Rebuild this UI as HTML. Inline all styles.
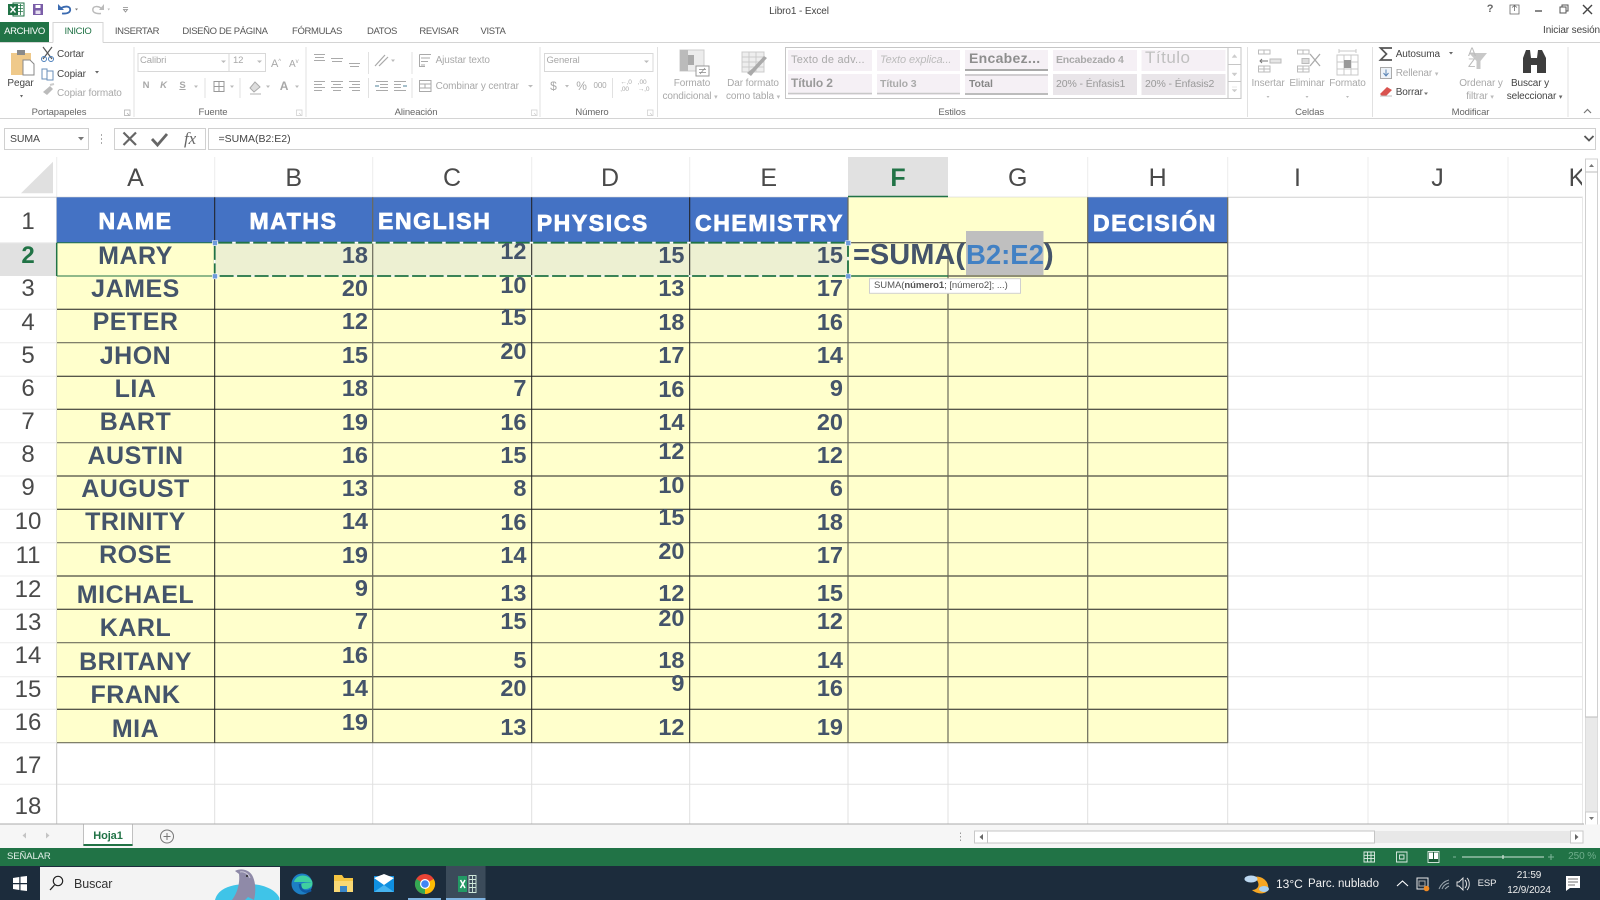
<!DOCTYPE html>
<html lang="es"><head><meta charset="utf-8"><title>Libro1 - Excel</title>
<style>
html,body{margin:0;padding:0;width:1600px;height:900px;overflow:hidden;background:#fff}
#p{position:relative;width:1600px;height:900px;overflow:hidden;font-family:"Liberation Sans",sans-serif;color:#444}
svg.bg{position:absolute;left:0;top:0}
.t{position:absolute;white-space:nowrap;font-size:9.5px;line-height:14px;letter-spacing:-.1px}
.x{transform:translateX(-50%)}
.g{color:#a8a8a8}.m6{color:#666}
.ar{font-size:7px;color:#bbb}
.tab{font-size:9.5px;letter-spacing:-.35px;color:#555}
.n{position:absolute;margin-top:-1px;font:bold 23.5px/30px "Liberation Sans",sans-serif;color:#44546a}
.b{right:1232px}.c{right:1073.5px}.d{right:915.5px}.e{right:757px}
.m{position:absolute;margin-top:1px;left:135.5px;transform:translateX(-50%);font:bold 25px/30px "Liberation Sans",sans-serif;letter-spacing:.5px;color:#44546a;white-space:nowrap}
.rn{position:absolute;margin-top:1px;left:0;width:56px;text-align:center;font:24px/30px "Liberation Sans",sans-serif;color:#4a4a4a}
.cl{position:absolute;top:162.5px;transform:translateX(-50%);font:25px/30px "Liberation Sans",sans-serif;color:#4a4a4a}
.h{position:absolute;font:bold 23px/30px "Liberation Sans",sans-serif;letter-spacing:1.6px;color:#fff;-webkit-text-stroke:.8px #fff;white-space:nowrap}
</style></head><body><div id="p">
<svg class="bg" width="1600" height="900" viewBox="0 0 1600 900" fill="none">
<!-- ribbon lines -->
<rect x="0" y="22" width="49" height="20.5" fill="#217346"/>
<path d="M0 42.5H53M103 42.5H1600" stroke="#d4d4d4"/>
<path d="M53 42.5V22.5H103V42.5" stroke="#d4d4d4"/>
<path d="M0 118.5H1600" stroke="#d4d4d4"/>
<path d="M134 47V117M306 47V117M540 47V117M657.5 47V117M1247.5 47V117M1372.5 47V117M1568 47V117" stroke="#e1e1e1"/>
<path d="M368.5 52V74M412 52V74M368.5 78V98M412 78V98M612.5 78V98M205 78V98M240 78V98" stroke="#e1e1e1"/>
<!-- title icons -->
<rect x="13" y="3" width="11" height="13" fill="#fff" stroke="#217346"/><path d="M18 5.5H23M18 8.5H23M18 11.5H23M20.5 4V15" stroke="#217346" stroke-width=".8"/><rect x="8" y="4" width="10" height="11" fill="#217346"/><path d="M10.5 6.5L15.5 12.5M15.5 6.5L10.5 12.5" stroke="#fff" stroke-width="1.4"/>
<path d="M33 4H43V15H33Z" fill="#7b5ea8"/><rect x="35.5" y="5" width="5" height="3" fill="#fff"/><rect x="35.5" y="10.5" width="5" height="3.500" fill="#e6e0f0"/>
<path d="M62 13.500C68 14 71 12 70 8.500C69 6 65 6 61 8" stroke="#3a6ab0" stroke-width="1.800"/><path d="M58 4V10H64Z" fill="#3a6ab0"/><path d="M75 8.500L78 8.500L76.500 10.500Z" fill="#777"/>
<path d="M101 13.500C95 14 92 12 93 8.500C94 6 98 6 101 8" stroke="#bbb" stroke-width="1.500"/><path d="M104 4V10H99Z" fill="#bbb"/><path d="M107.500 8.500L110 8.500L108.700 10.500Z" fill="#bbb"/>
<path d="M123 7.500H128M123.500 9.500H127.500L125.500 12Z" stroke="#888" stroke-width=".8"/>
<path d="M1510 5H1519V14H1510ZM1512 7.500L1514.500 5.500L1517 7.500M1514.500 6V11" stroke="#666" stroke-width=".8"/>
<path d="M1535 11H1542" stroke="#555" stroke-width="1.400"/>
<path d="M1560 7H1566V13H1560ZM1562 7V5H1568V11H1566" stroke="#555"/>
<path d="M1583 5L1592 14M1592 5L1583 14" stroke="#444" stroke-width="1.400"/>
<!-- clipboard -->
<rect x="11" y="53" width="20" height="22" fill="#efc98a"/><rect x="17" y="50" width="8" height="5" fill="#8a8a8a"/><path d="M23 60H30L34 64V75H23Z" fill="#fff" stroke="#888"/>
<path d="M43 47L52 59M52 47L43 59" stroke="#555" stroke-width="1.200"/><circle cx="44" cy="59" r="2.500" stroke="#4a7ebb"/><circle cx="51" cy="59" r="2.500" stroke="#4a7ebb"/>
<path d="M42 69H47V79H42ZM47 71H53V80H47Z" fill="#fff" stroke="#6a8fb8"/>
<path d="M43 92L50 86L53 89L47 95Z" fill="#bbb"/><path d="M50 85L54 84" stroke="#ccc" stroke-width="2"/>
<path d="M20 95L23 95L21.500 97.500Z" fill="#666"/><path d="M95 71H99L97 73.500Z" fill="#666"/>
<!-- font dropdowns -->
<path d="M138 53.500H265.500V71.500H138ZM229 53.500V71.500" stroke="#d8d8d8"/><path d="M221 60.500H226L223.500 63Z" fill="#bbb"/><path d="M257 60.500H262L259.500 63Z" fill="#bbb"/>
<path d="M214 81.500H224V91.500H214ZM219 81.500V91.500M214 86.500H224" stroke="#999"/>
<path d="M250 88L255 82L260 87L254 92Z" stroke="#aaa" fill="#ddd"/><rect x="250" y="93" width="11" height="2" fill="#d8d8d8"/>
<path d="M194 85.500H198L196 88ZM230 85.500H234L232 88ZM266 85.500H270L268 88ZM295 85.500H299L297 88Z" fill="#bbb"/>
<!-- align -->
<path d="M314 54.500H325M315 57.500H324M314 60.500H325M331 58.500H343M332 61.500H342M349 63.500H360M350 66.500H359M314 81.500H325M314 84.500H322M314 87.500H325M314 90.500H322M331 81.500H343M333 84.500H341M331 87.500H343M333 90.500H341M349 81.500H360M352 84.500H360M349 87.500H360M352 90.500H360" stroke="#aaa"/>
<path d="M375 66L385 55M379 66L388 57" stroke="#aaa" stroke-width="1.200"/><path d="M391 59.500H395L393 62Z" fill="#bbb"/>
<path d="M376 81.500H388M380 84.500H388M380 87.500H388M376 90.500H388M394 81.500H406M394 84.500H401M394 87.500H401M394 90.500H406" stroke="#aaa"/><path d="M379 86L375 86" stroke="#8ab" stroke-width="1.500"/><path d="M403 86L407 86" stroke="#8ab" stroke-width="1.500"/>
<path d="M419.500 54.500H431M419.500 54.500V66.500H425M421 58H430M421 61.500H428M421 65H425" stroke="#aaa"/>
<path d="M419.500 80.500H431V91.500H419.500ZM419.500 84H431M419.500 88H431M425 84V88" stroke="#aaa"/>
<path d="M528 85H533L530.500 87.500Z" fill="#bbb"/>
<!-- launchers -->
<path d="M124.500 110H130V115.500H124.500ZM127 113L129 115" stroke="#aaa" stroke-width=".7"/>
<path d="M296.500 110H302V115.500H296.500ZM299 113L301 115" stroke="#ccc" stroke-width=".7"/>
<path d="M531.500 110H537V115.500H531.500ZM534 113L536 115" stroke="#ccc" stroke-width=".7"/>
<path d="M647.500 110H653V115.500H647.500ZM650 113L652 115" stroke="#ccc" stroke-width=".7"/>
<!-- number -->
<path d="M544.500 53.500H653V71.500H544.500Z" stroke="#d8d8d8"/><path d="M644 60.500H649L646.500 63Z" fill="#bbb"/>
<path d="M565 85H569L567 87.500Z" fill="#bbb"/>
<!-- formato cond -->
<rect x="680" y="50" width="24" height="21" fill="#ececec" stroke="#ccc"/><rect x="680" y="50" width="8" height="21" fill="#bbb"/><rect x="688" y="55" width="6" height="10" fill="#aaa"/><rect x="696" y="66" width="13" height="10" fill="#fff" stroke="#999"/><path d="M699 69.500H706M699 72.500H706M705 68L700 74" stroke="#888" stroke-width=".7"/>
<rect x="742" y="52" width="22" height="20" fill="#eee" stroke="#ccc"/><path d="M742 57H764M742 62H764M742 67H764M749 52V72M756 52V72" stroke="#ccc"/><path d="M767 58L756 70L751 76L747 73L753 68L764 56Z" fill="#aaa"/>
<!-- gallery -->
<path d="M785.500 47.500H1241V98.500H785.500ZM1228 47.500V98.500M1228 64.500H1241M1228 81.500H1241" stroke="#c6c6c6"/>
<rect x="788" y="50" width="84" height="21" fill="#f5f0f5"/><rect x="877" y="50" width="83" height="21" fill="#f5f0f5"/><rect x="965" y="50" width="83" height="21" fill="#f5f0f5"/><rect x="1053" y="50" width="84" height="21" fill="#f5f0f5"/><rect x="1141.500" y="50" width="84" height="21" fill="#f5f0f5"/>
<rect x="788" y="74" width="84" height="21" fill="#f5f0f5"/><rect x="877" y="74" width="83" height="21" fill="#f5f0f5"/><rect x="965" y="74" width="83" height="21" fill="#f5f0f5"/><rect x="1053" y="74" width="84" height="21" fill="#e9e5e9"/><rect x="1141.500" y="74" width="84" height="21" fill="#e9e5e9"/>
<path d="M965 70H1048" stroke="#aaa" stroke-width="2"/><path d="M788 93.500H872M877 93.500H960" stroke="#c8c8c8" stroke-width="1.500"/><path d="M965 75H1048" stroke="#aaa"/><path d="M965 94H1048" stroke="#aaa" stroke-width="1.500"/>
<path d="M1232 57.500L1234.500 54.500L1237 57.500ZM1232 73H1237L1234.500 76ZM1232 87H1237M1232 89.500H1237L1234.500 92Z" fill="#ccc" stroke="#ccc" stroke-width=".4"/>
<!-- cells -->
<path d="M1258.500 50H1270V54H1258.500ZM1258.500 66H1270V72H1258.500ZM1264 66V72M1264 50V54M1258.500 69H1270" stroke="#bbb"/><rect x="1270" y="59" width="11" height="4" stroke="#bbb" fill="#e6e6e6"/><path d="M1260 61H1268M1262 59L1260 61L1262 63" stroke="#777"/>
<path d="M1297.500 50H1309V54H1297.500ZM1297.500 66H1309V72H1297.500ZM1303 66V72M1303 50V54M1297.500 69H1309" stroke="#bbb"/><rect x="1302" y="58.500" width="7" height="5" fill="#ddd" stroke="#bbb"/><path d="M1310 54L1320 66M1320 54L1310 66" stroke="#aaa" stroke-width="1.300"/>
<path d="M1337 55H1358V75H1337ZM1344 55V75M1351 55V75M1337 62H1358M1337 69H1358M1339 51H1356M1339 49V53M1356 49V53" stroke="#c8c8c8"/><rect x="1344" y="60" width="7" height="8" fill="#999"/>
<path d="M1266.500 96H1269.500L1268 98ZM1305.500 96H1308.500L1307 98ZM1346 96H1349L1347.500 98Z" fill="#bbb"/>
<!-- modify -->
<path d="M1392 48H1380.500L1386.500 54L1380.500 60H1392" stroke="#555" stroke-width="1.700"/>
<path d="M1449 52H1453L1451 54.500Z" fill="#666"/>
<rect x="1380.500" y="67.500" width="11" height="11" stroke="#aaa" fill="#eef3f8"/><path d="M1386 69.500V75.500M1383.500 73L1386 76L1388.500 73" stroke="#5a84b5"/>
<path d="M1380 94L1387 87L1392 90L1386 96H1382Z" fill="#d9534f"/><path d="M1380 96H1392" stroke="#bbb"/>
<path d="M1424 92.500H1428L1426 95Z" fill="#777"/>
<path d="M1469 53H1487L1480.500 61V69H1476.500V61Z" fill="#c8c8c8"/>
<path d="M1523 73V58L1526 50H1530L1531 58V73ZM1537 73V58L1538 50H1542L1546 58V73Z" fill="#3d3d3d"/><rect x="1530" y="58" width="8" height="7" fill="#3d3d3d"/>
<path d="M1584 113L1587.500 109.500L1591 113" stroke="#777" stroke-width="1.200"/>
<!-- formula bar -->
<path d="M4.500 128.500H88.500V149.500H4.500ZM114.500 128.500H205.500V149.500H114.500ZM208.500 128.500H1595.500V149.500H208.500Z" stroke="#d0d0d0" fill="#fff"/>
<path d="M78 137H84L81 140.500Z" fill="#777"/><path d="M101.500 134V136M101.500 138V140M101.500 142V144" stroke="#aaa"/>
<path d="M123.500 132.500L136 145M136 132.500L123.500 145" stroke="#666" stroke-width="2.200"/>
<path d="M152 139L157.500 145L167 134" stroke="#666" stroke-width="2.800"/>
<path d="M1584.500 136L1589 140.500L1593.500 136" stroke="#555" stroke-width="1.800"/>

<!-- sheet: headers -->
<rect x="0" y="242.700" width="56.500" height="33.300" fill="#e1e1e1"/>
<rect x="848" y="157" width="100" height="40" fill="#e1e1e1"/>
<path d="M21 193.300L53 161.700V193.300Z" fill="#e0e0e0"/>
<path d="M56.700 157V197M214.700 157V197M372.700 157V197M531.700 157V197M689.700 157V197M1087.700 157V197M1227.700 157V197M1368 157V197M1508 157V197" stroke="#ececec"/>
<path d="M0 197.300H1583" stroke="#d0d0d0"/>
<path d="M0 242.700H56M0 309.300H56M0 342.700H56M0 376.300H56M0 409.300H56M0 442.700H56M0 476H56M0 509.300H56M0 542.700H56M0 576H56M0 609.300H56M0 642.700H56M0 676.700H56M0 709.300H56M0 742.700H56M0 784.300H56" stroke="#ececec"/>
<path d="M56.700 197V825" stroke="#c8c8c8"/>
<!-- fills -->
<rect x="56.700" y="242.700" width="1171" height="500" fill="#ffffcc"/>
<rect x="848" y="197.300" width="240" height="45.400" fill="#ffffcc"/>
<rect x="56.700" y="197.300" width="791.300" height="45.400" fill="#4472c4"/>
<rect x="1087.700" y="197.300" width="140" height="45.400" fill="#4472c4"/>
<rect x="214.700" y="242.700" width="633.300" height="33.300" fill="#edf0d2"/>
<!-- white grid -->
<path d="M1228 242.700H1583M1228 276H1583M1228 309.300H1583M1228 342.700H1583M1228 376.300H1583M1228 409.300H1583M1228 442.700H1583M1228 476H1583M1228 509.300H1583M1228 542.700H1583M1228 576H1583M1228 609.300H1583M1228 642.700H1583M1228 676.700H1583M1228 709.300H1583M1228 742.700H1583M57 784.300H1583" stroke="#e2e2e2"/>
<path d="M1368 197V825M1508 197V825M1582.500 197V825" stroke="#e8e8e8"/>
<path d="M214.700 743V825M372.700 743V825M531.700 743V825M689.700 743V825M848 743V825M948 743V825M1087.700 743V825M1227.700 197V825" stroke="#e0e0e0"/>
<path d="M1368 442.700H1508V476.300H1368Z" stroke="#cfcfcf"/>
<!-- data grid -->
<path d="M57 276H1228M57 309.300H1228M57 376.300H1228M57 409.300H1228M57 476H1228M57 509.300H1228M57 576H1228M57 609.300H1228M57 676.700H1228M57 709.300H1228" stroke="#1e1e1e"/>
<path d="M57 342.700H1228M57 442.700H1228M57 542.700H1228M57 642.700H1228M57 742.700H1228" stroke="#6e6e5c" stroke-width="1.200"/>
<path d="M848 242.700H1228" stroke="#333"/>
<path d="M214.700 197.300V742.700M531.700 197.300V742.700M689.700 197.300V742.700" stroke="#1e1e1e"/>
<path d="M372.700 197.300V742.700M848 197.300V742.700M948 243V742.700M1087.700 197.300V742.700M1227.700 197.300V742.700" stroke="#6a6a5a" stroke-width="1.200"/>
<path d="M56.700 242.700V276" stroke="#217346" stroke-width="1.500"/>
<path d="M57 242.700H214.700M57 276H214.700" stroke="#217346"/>
<path d="M848 196.500H948" stroke="#217346" stroke-width="1.500"/>
<path d="M848 276H948" stroke="#217346" stroke-width="1.500"/>
<!-- ants -->
<path d="M214.700 242.700H848V276H214.700Z" stroke="#217346" stroke-width="1.800"/>
<path d="M214.700 242.700H848V276H214.700Z" stroke="#fff" stroke-width="1.800" stroke-dasharray="3.500 14"/>
<path d="M212.500 240.500h5v5h-5zM212.500 273.800h5v5h-5zM845.800 240.500h5v5h-5zM845.800 273.800h5v5h-5z" fill="#6f9bdc" stroke="#fff" stroke-width=".6"/>
<rect x="966" y="231" width="77.500" height="44" fill="#bfbfbf"/>
<!-- tooltip -->
<rect x="869.500" y="278.700" width="151" height="14.600" fill="#fff" stroke="#d0d0d0"/>

<!-- v scroll -->
<rect x="1585.500" y="159" width="12" height="667" fill="#fff" stroke="#d0d0d0"/>
<rect x="1585.500" y="717" width="12" height="95" fill="#e9e9e9"/>
<path d="M1585.500 172H1597.500M1585.500 717H1597.500" stroke="#bbb"/><path d="M1585.500 812H1597.500" stroke="#ccc"/>
<path d="M1589 167L1591.500 164L1594 167ZM1589 817L1591.500 820L1594 817Z" fill="#777"/>

<!-- sheet tabs -->
<g transform="translate(0,-1.5)">
<rect x="0" y="826" width="1600" height="24" fill="#f6f6f6"/>
<path d="M0 825.500H1584" stroke="#ababab"/>
<path d="M83.500 826V847H132.500V826" fill="#fff" stroke="#c0c0c0"/><rect x="83.500" y="845.500" width="49" height="2" fill="#217346"/>
<path d="M26 834L22.500 837L26 840ZM46 834L49.500 837L46 840Z" fill="#c4c4c4"/>
<circle cx="167" cy="838" r="6.500" stroke="#777"/><path d="M163.500 838H170.500M167 834.500V841.500" stroke="#777"/>
<path d="M960.500 834V835.500M960.500 837.500V839M960.500 841V842.500" stroke="#999"/>
<rect x="974" y="832.500" width="609" height="12" fill="#e8e8e8"/>
<rect x="974.500" y="832.500" width="13" height="12" fill="#fff" stroke="#c8c8c8"/><rect x="987.500" y="832.500" width="387" height="12" fill="#fff" stroke="#c4c4c4"/><rect x="1570.500" y="832.500" width="12.500" height="12" fill="#fff" stroke="#c8c8c8"/>
<path d="M983 835.500L979.500 838.500L983 841.500ZM1575 835.500L1578.500 838.500L1575 841.500Z" fill="#666"/>
</g>
<g transform="translate(0,-2)">
<!-- status -->
<rect x="0" y="850" width="1600" height="18" fill="#217346"/>
<path d="M1364 854H1374.500V864H1364ZM1367.500 854V864M1371 854V864M1364 857.300H1374.500M1364 860.600H1374.500" stroke="#dfeee6" stroke-width=".9"/>
<path d="M1396.500 854H1407V864H1396.500ZM1399.500 857H1404V861H1399.500Z" stroke="#dfeee6" stroke-width=".9"/>
<rect x="1428" y="853.500" width="11" height="11" fill="#1a5a37" stroke="#dfeee6" stroke-width=".9"/><path d="M1429 854.500H1433V861H1429ZM1434 854.500H1438V861H1434Z" fill="#fff"/>
<path d="M1453 859H1456M1462 859H1544M1548 859H1554M1551 856V862" stroke="#7fb59a"/><path d="M1503 857V861" stroke="#fff"/>
<path d="M1462 859H1544" stroke="#cfe3d8"/>
<!-- taskbar -->
<rect x="0" y="868" width="1600" height="34" fill="#1c2c3c"/>
<path d="M13 880L19.300 879V885H13ZM20.500 878.800L27 878V885H20.500ZM13 886.200H19.300V892L13 891ZM20.500 886.200H27V893L20.500 892.200Z" fill="#fff"/>
<rect x="40" y="869" width="240" height="33" fill="#f3f3f3"/>
<circle cx="58" cy="883" r="4.700" stroke="#222" stroke-width="1.200"/><path d="M54.500 887L50 892" stroke="#222" stroke-width="1.300"/>
<path d="M215 902C218 890 232 886 248 886C264 886 276 892 279.500 900V902Z" fill="#3fc4e8"/>
<path d="M232 902C238 894 240 884 239 876L235 873C240 870 248 871 252 877C256 884 256 894 254 902L248 899L245 902Z" fill="#8f8aa8"/>
<path d="M240 874C243 873 248 875 250 880" stroke="#c9c6d6"/><circle cx="247" cy="878" r="1" fill="#222"/>
<circle cx="302" cy="886" r="10.500" fill="#1d7fc4"/><path d="M294 884C296 876 308 875 312 883C314 888 310 891 305 891C301 891 299 888 301 886C304 884 309 885 312 884" fill="#3fd0a0"/><path d="M300 886C300 892 305 896 311 892" stroke="#0e5aa6" stroke-width="2.500"/>
<path d="M334 877H342L344 880H353V894H334Z" fill="#f5c542"/><rect x="334" y="883" width="19" height="11" fill="#f9d975"/><rect x="340" y="888" width="7" height="6" fill="#3a86c8"/>
<rect x="374" y="878" width="20" height="16" fill="#0f8fe0"/><path d="M374 880L384 887L394 880L384 876Z" fill="#fff"/><path d="M374 894L384 887L394 894Z" fill="#46b4f0"/>
<circle cx="425" cy="886" r="10" fill="#ea4335"/><path d="M425 886L433.700 881A10 10 0 0 1 425 896Z" fill="#fbbc05"/><path d="M425 896A10 10 0 0 1 416.300 881L425 886Z" fill="#34a853"/><circle cx="425" cy="886" r="5" fill="#fff"/><circle cx="425" cy="886" r="3.800" fill="#4285f4"/>
<rect x="446" y="868" width="39.500" height="34" fill="#3b4b5a"/>
<rect x="408" y="900" width="33" height="2" fill="#7fb3e0"/><rect x="446" y="900" width="39.500" height="2" fill="#7fb3e0"/>
<rect x="458" y="878" width="9" height="16" fill="#21a366" opacity=".9"/><path d="M460.500 882L465 890M465 882L460.500 890" stroke="#fff" stroke-width="1.500"/><path d="M469 877.500H476V894.500H469ZM469 881.500H476M469 885.500H476M469 889.500H476M472.500 877.500V894.500" stroke="#cfe8da" stroke-width=".9"/>
<!-- tray -->
<path d="M1254 879C1262 877 1270 884 1268 892C1266 896 1258 897 1252 892C1258 892 1262 886 1254 879Z" fill="#f5a623"/>
<ellipse cx="1251" cy="881" rx="6.500" ry="3.500" fill="#bcd8f0"/><ellipse cx="1264" cy="891" rx="5" ry="3" fill="#a8d0f0"/>
<path d="M1397 888L1402.500 883L1408 888" stroke="#fff" stroke-width="1.100"/>
<path d="M1417 880H1428V891H1417Z" stroke="#e8e8e8"/><rect x="1419" y="883" width="6" height="5" stroke="#aaa"/><circle cx="1426.500" cy="890.500" r="2.800" fill="#f08a24"/>
<path d="M1439 891C1441 886 1445 883 1449 882M1442 891C1443 888 1445 886 1449 885M1445 891C1446 890 1447 889 1449 888" stroke="#9aa5ad"/>
<path d="M1457 884H1459L1463 880V892L1459 888H1457ZM1465 882C1467 884 1467 888 1465 890M1467 880C1470 883 1470 889 1467 892" stroke="#e8e8e8" stroke-width=".9"/>
<path d="M1566 878H1580V890H1570L1566 893Z" fill="#fff"/><path d="M1568 881H1578M1568 884H1578M1568 887H1575" stroke="#444" stroke-width=".8"/>
</g>
</svg>

<!-- title -->
<div class="t x" style="left:799px;top:5px;font-size:10px">Libro1 - Excel</div>
<div class="t x" style="left:1490px;top:2px;font-size:11px;font-weight:bold;color:#666">?</div>
<div class="t x tab" style="left:24.500px;top:24.500px;color:#fff">ARCHIVO</div>
<div class="t x tab" style="left:78px;top:24.500px;color:#217346">INICIO</div>
<div class="t x tab" style="left:137px;top:24.500px">INSERTAR</div>
<div class="t x tab" style="left:225px;top:24.500px">DISEÑO DE PÁGINA</div>
<div class="t x tab" style="left:317px;top:24.500px">FÓRMULAS</div>
<div class="t x tab" style="left:382px;top:24.500px">DATOS</div>
<div class="t x tab" style="left:439px;top:24.500px">REVISAR</div>
<div class="t x tab" style="left:493px;top:24.500px">VISTA</div>
<div class="t" style="right:0;top:24px;font-size:10px;letter-spacing:-.1px">Iniciar sesión</div>

<div style="position:absolute;left:0;top:1px;width:1600px;height:0">
<div class="t" style="left:57px;top:46.500px;font-size:10px">Cortar</div>
<div class="t" style="left:57px;top:66.500px;font-size:10px">Copiar</div>
<div class="t g" style="left:57px;top:85.500px;font-size:10px">Copiar formato</div>
<div class="t x" style="left:20.500px;top:76px;font-size:10px">Pegar</div>
<div class="t x m6" style="left:59px;top:104.500px">Portapapeles</div>
<div class="t g" style="left:140px;top:52.500px">Calibri</div>
<div class="t g" style="left:233px;top:52.500px">12</div>
<div class="t g" style="left:271px;top:53.500px;font-size:11px">A<span style="font-size:6px;vertical-align:4px">^</span></div>
<div class="t g" style="left:289px;top:53.500px;font-size:10px">A<span style="font-size:6px;vertical-align:4px">v</span></div>
<div class="t g x" style="left:146px;top:78px;font-weight:bold">N</div>
<div class="t g x" style="left:163.500px;top:78px;font-weight:bold;font-style:italic">K</div>
<div class="t g x" style="left:182.500px;top:78px;font-weight:bold;text-decoration:underline">S</div>
<div class="t g x" style="left:284px;top:78px;font-size:12px;font-weight:bold">A</div>
<div class="t x m6" style="left:213px;top:104.500px">Fuente</div>
<div class="t g" style="left:435.600px;top:53px;font-size:10px">Ajustar texto</div>
<div class="t g" style="left:435.600px;top:79px;font-size:10px">Combinar y centrar</div>
<div class="t x m6" style="left:416px;top:104.500px">Alineación</div>
<div class="t g" style="left:546.500px;top:52.500px">General</div>
<div class="t g x" style="left:553.400px;top:78px;font-size:12px">$</div>
<div class="t g x" style="left:581.600px;top:78px;font-size:12px">%</div>
<div class="t g x" style="left:600px;top:78px;font-size:8px">000</div>
<div class="t g x" style="left:626px;top:78px;font-size:6.500px;line-height:7px">←,0<br>,00</div>
<div class="t g x" style="left:643.600px;top:78px;font-size:6.500px;line-height:7px">,00<br>→,0</div>
<div class="t x m6" style="left:592px;top:104.500px">Número</div>
<div class="t x g" style="left:692px;top:75.500px;font-size:10px">Formato</div>
<div class="t x g" style="left:690px;top:89px;font-size:10px">condicional <span class="ar">▾</span></div>
<div class="t x g" style="left:753px;top:75.500px;font-size:10px">Dar formato</div>
<div class="t x g" style="left:753px;top:89px;font-size:10px">como tabla <span class="ar">▾</span></div>
<div class="t" style="left:791px;top:52px;font-size:11px;color:#aaa;letter-spacing:.2px">Texto de adv...</div>
<div class="t" style="left:880px;top:52px;font-size:11px;color:#bbb;font-style:italic">Texto explica...</div>
<div class="t" style="left:969px;top:50px;font-size:14px;font-weight:bold;color:#8e8e8e;letter-spacing:.3px">Encabez...</div>
<div class="t" style="left:1056px;top:52px;font-size:10.500px;font-weight:bold;color:#aaa;letter-spacing:-.2px">Encabezado 4</div>
<div class="t" style="left:1145px;top:50px;font-size:17px;color:#c0c0c0;letter-spacing:.5px">Título</div>
<div class="t" style="left:791px;top:75px;font-size:12px;font-weight:bold;color:#999">Título 2</div>
<div class="t" style="left:880px;top:76px;font-size:10.500px;font-weight:bold;color:#aaa">Título 3</div>
<div class="t" style="left:969px;top:76px;font-size:10.500px;font-weight:bold;color:#888">Total</div>
<div class="t" style="left:1056px;top:76px;font-size:10.500px;color:#999">20% - Énfasis1</div>
<div class="t" style="left:1145px;top:76px;font-size:10.500px;color:#999">20% - Énfasis2</div>
<div class="t x m6" style="left:952px;top:104.500px">Estilos</div>
<div class="t x g" style="left:1268px;top:75.500px;font-size:10px">Insertar</div>
<div class="t x g" style="left:1307px;top:75.500px;font-size:10px">Eliminar</div>
<div class="t x g" style="left:1347.500px;top:75.500px;font-size:10px">Formato</div>
<div class="t x m6" style="left:1309.600px;top:104.500px">Celdas</div>
<div class="t" style="left:1395.700px;top:46.500px;font-size:10px">Autosuma</div>
<div class="t g" style="left:1395.700px;top:66px;font-size:10px">Rellenar <span class="ar">▾</span></div>
<div class="t" style="left:1395.700px;top:85px;font-size:10px">Borrar</div>
<div class="t x" style="left:1472px;top:46px;font-size:12px;color:#bbb;line-height:11px">A<br>Z</div>
<div class="t x g" style="left:1481px;top:75.500px;font-size:10px">Ordenar y</div>
<div class="t x g" style="left:1480px;top:89px;font-size:10px">filtrar <span class="ar">▾</span></div>
<div class="t x" style="left:1530px;top:75.500px;font-size:10px">Buscar y</div>
<div class="t x" style="left:1534.500px;top:89px;font-size:10px">seleccionar <span class="ar" style="color:#666">▾</span></div>
<div class="t x m6" style="left:1470.500px;top:104.500px">Modificar</div>
</div>

<div class="t" style="left:10px;top:132px;font-size:10.500px">SUMA</div>
<div class="t" style="left:184px;top:130px;font:italic 17px/18px 'Liberation Serif',serif;color:#666">fx</div>
<div class="t" style="left:218.500px;top:132px;font-size:10.500px;letter-spacing:0">=SUMA(B2:E2)</div>

<!-- column letters -->
<div class="cl" style="left:135.500px">A</div><div class="cl" style="left:293.700px">B</div><div class="cl" style="left:452px">C</div><div class="cl" style="left:610px">D</div><div class="cl" style="left:768.700px">E</div>
<div class="cl" style="left:898px;font-weight:bold;color:#217346">F</div><div class="cl" style="left:1017.700px">G</div><div class="cl" style="left:1157.700px">H</div><div class="cl" style="left:1297.500px">I</div><div class="cl" style="left:1437.500px">J</div>
<div style="position:absolute;left:1500px;top:162.500px;width:82px;height:30px;overflow:hidden"><div class="cl" style="left:77px;top:0">K</div></div>

<!-- row numbers -->
<div class="rn" style="top:205.700px">1</div><div class="rn" style="top:240px;font-weight:bold;color:#217346">2</div><div class="rn" style="top:273px">3</div><div class="rn" style="top:306.500px">4</div><div class="rn" style="top:339.500px">5</div><div class="rn" style="top:373px">6</div><div class="rn" style="top:406px">7</div><div class="rn" style="top:439px">8</div><div class="rn" style="top:472px">9</div><div class="rn" style="top:506px">10</div><div class="rn" style="top:540px">11</div><div class="rn" style="top:574px">12</div><div class="rn" style="top:607px">13</div><div class="rn" style="top:640px">14</div><div class="rn" style="top:674px">15</div><div class="rn" style="top:707px">16</div><div class="rn" style="top:749.500px">17</div><div class="rn" style="top:791px">18</div>

<!-- headers -->
<div class="h" style="left:135.500px;top:205.700px;transform:translateX(-50%)">NAME</div>
<div class="h" style="left:293.500px;top:205.700px;transform:translateX(-50%)">MATHS</div>
<div class="h" style="left:378px;top:206px">ENGLISH</div>
<div class="h" style="left:536.700px;top:207.500px">PHYSICS</div>
<div class="h" style="left:695px;top:207.500px">CHEMISTRY</div>
<div class="h" style="left:1093px;top:207.500px">DECISIÓN</div>

<!-- names -->
<div class="m" style="top:240px">MARY</div><div class="m" style="top:273px">JAMES</div><div class="m" style="top:306px">PETER</div><div class="m" style="top:339.500px">JHON</div><div class="m" style="top:373px">LIA</div><div class="m" style="top:406px">BART</div><div class="m" style="top:439.500px">AUSTIN</div><div class="m" style="top:472.500px">AUGUST</div><div class="m" style="top:506px">TRINITY</div><div class="m" style="top:539px">ROSE</div><div class="m" style="top:579px">MICHAEL</div><div class="m" style="top:612px">KARL</div><div class="m" style="top:646px">BRITANY</div><div class="m" style="top:679px">FRANK</div><div class="m" style="top:712.500px">MIA</div>

<!-- B -->
<div class="n b" style="top:240.500px">18</div><div class="n b" style="top:273.700px">20</div><div class="n b" style="top:307px">12</div><div class="n b" style="top:341px">15</div><div class="n b" style="top:374px">18</div><div class="n b" style="top:407.500px">19</div><div class="n b" style="top:440.500px">16</div><div class="n b" style="top:474px">13</div><div class="n b" style="top:507px">14</div><div class="n b" style="top:540.500px">19</div><div class="n b" style="top:573.500px">9</div><div class="n b" style="top:607px">7</div><div class="n b" style="top:641px">16</div><div class="n b" style="top:674px">14</div><div class="n b" style="top:707.700px">19</div>
<!-- C -->
<div class="n c" style="top:237px">12</div><div class="n c" style="top:270.700px">10</div><div class="n c" style="top:303px">15</div><div class="n c" style="top:337px">20</div><div class="n c" style="top:374px">7</div><div class="n c" style="top:407.500px">16</div><div class="n c" style="top:441px">15</div><div class="n c" style="top:474px">8</div><div class="n c" style="top:507.700px">16</div><div class="n c" style="top:540.700px">14</div><div class="n c" style="top:579px">13</div><div class="n c" style="top:607px">15</div><div class="n c" style="top:645.500px">5</div><div class="n c" style="top:674px">20</div><div class="n c" style="top:712.500px">13</div>
<!-- D -->
<div class="n d" style="top:240.500px">15</div><div class="n d" style="top:274px">13</div><div class="n d" style="top:307.500px">18</div><div class="n d" style="top:341px">17</div><div class="n d" style="top:374.500px">16</div><div class="n d" style="top:407.500px">14</div><div class="n d" style="top:437px">12</div><div class="n d" style="top:470.500px">10</div><div class="n d" style="top:502.700px">15</div><div class="n d" style="top:536.700px">20</div><div class="n d" style="top:579px">12</div><div class="n d" style="top:603.500px">20</div><div class="n d" style="top:646px">18</div><div class="n d" style="top:669px">9</div><div class="n d" style="top:712.500px">12</div>
<!-- E -->
<div class="n e" style="top:240.500px">15</div><div class="n e" style="top:274px">17</div><div class="n e" style="top:307.500px">16</div><div class="n e" style="top:341px">14</div><div class="n e" style="top:374px">9</div><div class="n e" style="top:407.500px">20</div><div class="n e" style="top:441px">12</div><div class="n e" style="top:474px">6</div><div class="n e" style="top:507.700px">18</div><div class="n e" style="top:540.700px">17</div><div class="n e" style="top:579px">15</div><div class="n e" style="top:607px">12</div><div class="n e" style="top:645.500px">14</div><div class="n e" style="top:674px">16</div><div class="n e" style="top:712.500px">19</div>

<!-- formula in cell -->
<div class="n" style="left:853px;top:238px;font-size:29px;line-height:34px;white-space:nowrap;margin-top:0">=SUMA(<span style="position:absolute;left:113px;top:0;font-size:27.500px;color:#4281c4">B2:E2</span><span style="position:absolute;left:191px;top:0">)</span></div>
<div class="t" style="left:874px;top:279px;font-size:9.500px;letter-spacing:-.05px;color:#555">SUMA(<b>número1</b>; [número2]; ...)</div>

<!-- bottom -->
<div class="t x" style="left:108px;top:829px;font-size:11px;font-weight:bold;color:#217346">Hoja1</div>
<div class="t" style="left:7px;top:849.500px;font-size:9.500px;color:#e4f0e9">SEÑALAR</div>
<div class="t" style="right:4px;top:849.500px;font-size:10px;color:#6fae8c">250 %</div>
<div class="t" style="left:74px;top:875px;font-size:12.500px;color:#333;line-height:18px">Buscar</div>
<div class="t" style="left:1276px;top:875px;font-size:12px;color:#f2f2f2;line-height:18px;letter-spacing:0">13°C</div>
<div class="t" style="left:1308px;top:875px;font-size:11.500px;color:#f2f2f2;line-height:18px;letter-spacing:0">Parc. nublado</div>
<div class="t x" style="left:1487px;top:877px;font-size:9.500px;color:#eee">ESP</div>
<div class="t x" style="left:1529px;top:869px;font-size:10px;color:#eee">21:59</div>
<div class="t x" style="left:1529px;top:883.500px;font-size:10px;color:#eee">12/9/2024</div>
</div></body></html>
